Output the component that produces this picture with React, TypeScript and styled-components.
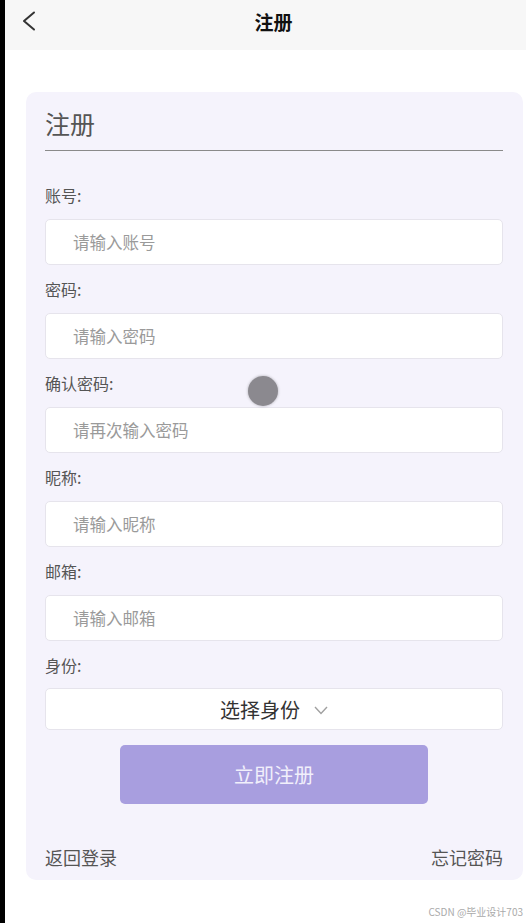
import React from "react";
import styled, { createGlobalStyle } from "styled-components";

const GlobalStyle = createGlobalStyle`
  html, body { margin: 0; padding: 0; background: #ffffff; }
  body { font-family: "Noto Sans CJK SC", "Noto Sans", sans-serif; }
  * { box-sizing: border-box; }
`;

const Screen = styled.div`
  position: relative;
  width: 526px;
  height: 923px;
  border-left: 5px solid #000;
  background: #fff;
  display: flex;
  flex-direction: column;
  overflow: hidden;
`;

const NavBar = styled.header`
  height: 50px;
  background: #f7f7f7;
  display: flex;
  align-items: center;
  position: relative;
  padding-left: 17px;
`;

const BackButton = styled.div`
  width: 16px;
  height: 22px;
  display: flex;
  align-items: center;
  margin-top: -8px;
`;

const NavTitle = styled.h1`
  position: absolute;
  left: 0;
  right: 0;
  margin: 0;
  padding-left: 16px;
  text-align: center;
  font-size: 19px;
  font-weight: 700;
  color: #111;
  line-height: 50px;
  margin-top: -6px;
  pointer-events: none;
`;

const Card = styled.main`
  margin: 42px 0 0 21px;
  width: 497px;
  background: #f5f3fc;
  border-radius: 10px;
  padding: 12px 20px 11px 19px;
  display: flex;
  flex-direction: column;
`;

const CardTitle = styled.h2`
  margin: 0;
  height: 38px;
  line-height: 38px;
  font-size: 25px;
  font-weight: 400;
  color: #555;
`;

const Divider = styled.div`
  margin-top: 8px;
  height: 1px;
  background: #8a8a8a;
  margin-bottom: 32px;
`;

const Field = styled.div<{ $gap?: number; $last?: boolean }>`
  display: flex;
  flex-direction: column;
  gap: ${(p) => p.$gap ?? 12}px;
  margin-bottom: ${(p) => (p.$last ? 0 : 12)}px;
`;

const Label = styled.label`
  height: 24px;
  line-height: 24px;
  font-size: 16px;
  color: #555;
`;

const Input = styled.input`
  height: 46px;
  width: 100%;
  border: 1px solid #e6e4ec;
  border-radius: 5px;
  background: #fff;
  padding: 0 0 0 27px;
  font-family: inherit;
  font-size: 16.5px;
  color: #333;
  outline: none;
  &::placeholder { color: #9a9a9a; }
`;

const Select = styled.div`
  height: 42px;
  border: 1px solid #e6e4ec;
  border-radius: 5px;
  background: #fff;
  display: flex;
  align-items: center;
  justify-content: center;
  gap: 14px;
  font-size: 20px;
  color: #333;
`;

const Chevron = styled.svg`
  width: 14px;
  height: 9px;
  margin-top: 2px;
`;

const SubmitButton = styled.button`
  margin: 15px auto 0;
  width: 308px;
  height: 59px;
  border: none;
  border-radius: 5px;
  background: #a89edf;
  color: #f1effb;
  font-family: inherit;
  font-size: 20px;
`;

const Footer = styled.div`
  margin-top: 41px;
  display: flex;
  justify-content: space-between;
  height: 24px;
  line-height: 24px;
`;

const FooterLink = styled.span`
  font-size: 18px;
  color: #555;
`;

const Watermark = styled.div`
  margin-top: 24px;
  padding-right: 3px;
  text-align: right;
  font-size: 10px;
  color: #aaa;
  font-family: "Noto Sans CJK SC", sans-serif;
`;

const TouchDot = styled.div`
  position: absolute;
  left: 243px;
  top: 376px;
  width: 30px;
  height: 30px;
  border-radius: 50%;
  background: #8b898f;
  box-shadow: 0 0 3px rgba(0, 0, 0, 0.3);
`;

const fields = [
  { label: "账号:", placeholder: "请输入账号", type: "text" },
  { label: "密码:", placeholder: "请输入密码", type: "password" },
  { label: "确认密码:", placeholder: "请再次输入密码", type: "password" },
  { label: "昵称:", placeholder: "请输入昵称", type: "text" },
  { label: "邮箱:", placeholder: "请输入邮箱", type: "text" },
];

export default function App() {
  return (
    <>
      <GlobalStyle />
      <Screen>
        <NavBar>
          <BackButton>
            <svg width="14" height="20" viewBox="0 0 14 20">
              <polyline points="12,1.5 2,10 12,18.5" fill="none" stroke="#333" strokeWidth="2" strokeLinecap="round" strokeLinejoin="round" />
            </svg>
          </BackButton>
          <NavTitle>注册</NavTitle>
        </NavBar>
        <Card>
          <CardTitle>注册</CardTitle>
          <Divider />
          {fields.map((f) => (
            <Field key={f.label}>
              <Label>{f.label}</Label>
              <Input type={f.type} placeholder={f.placeholder} />
            </Field>
          ))}
          <Field $gap={11} $last>
            <Label>身份:</Label>
            <Select>
              <span>选择身份</span>
              <Chevron viewBox="0 0 14 9">
                <polyline points="1,1 7,7.5 13,1" fill="none" stroke="#a0a0a0" strokeWidth="1.4" />
              </Chevron>
            </Select>
          </Field>
          <SubmitButton>立即注册</SubmitButton>
          <Footer>
            <FooterLink>返回登录</FooterLink>
            <FooterLink>忘记密码</FooterLink>
          </Footer>
        </Card>
        <Watermark>CSDN @毕业设计703</Watermark>
        <TouchDot />
      </Screen>
    </>
  );
}
